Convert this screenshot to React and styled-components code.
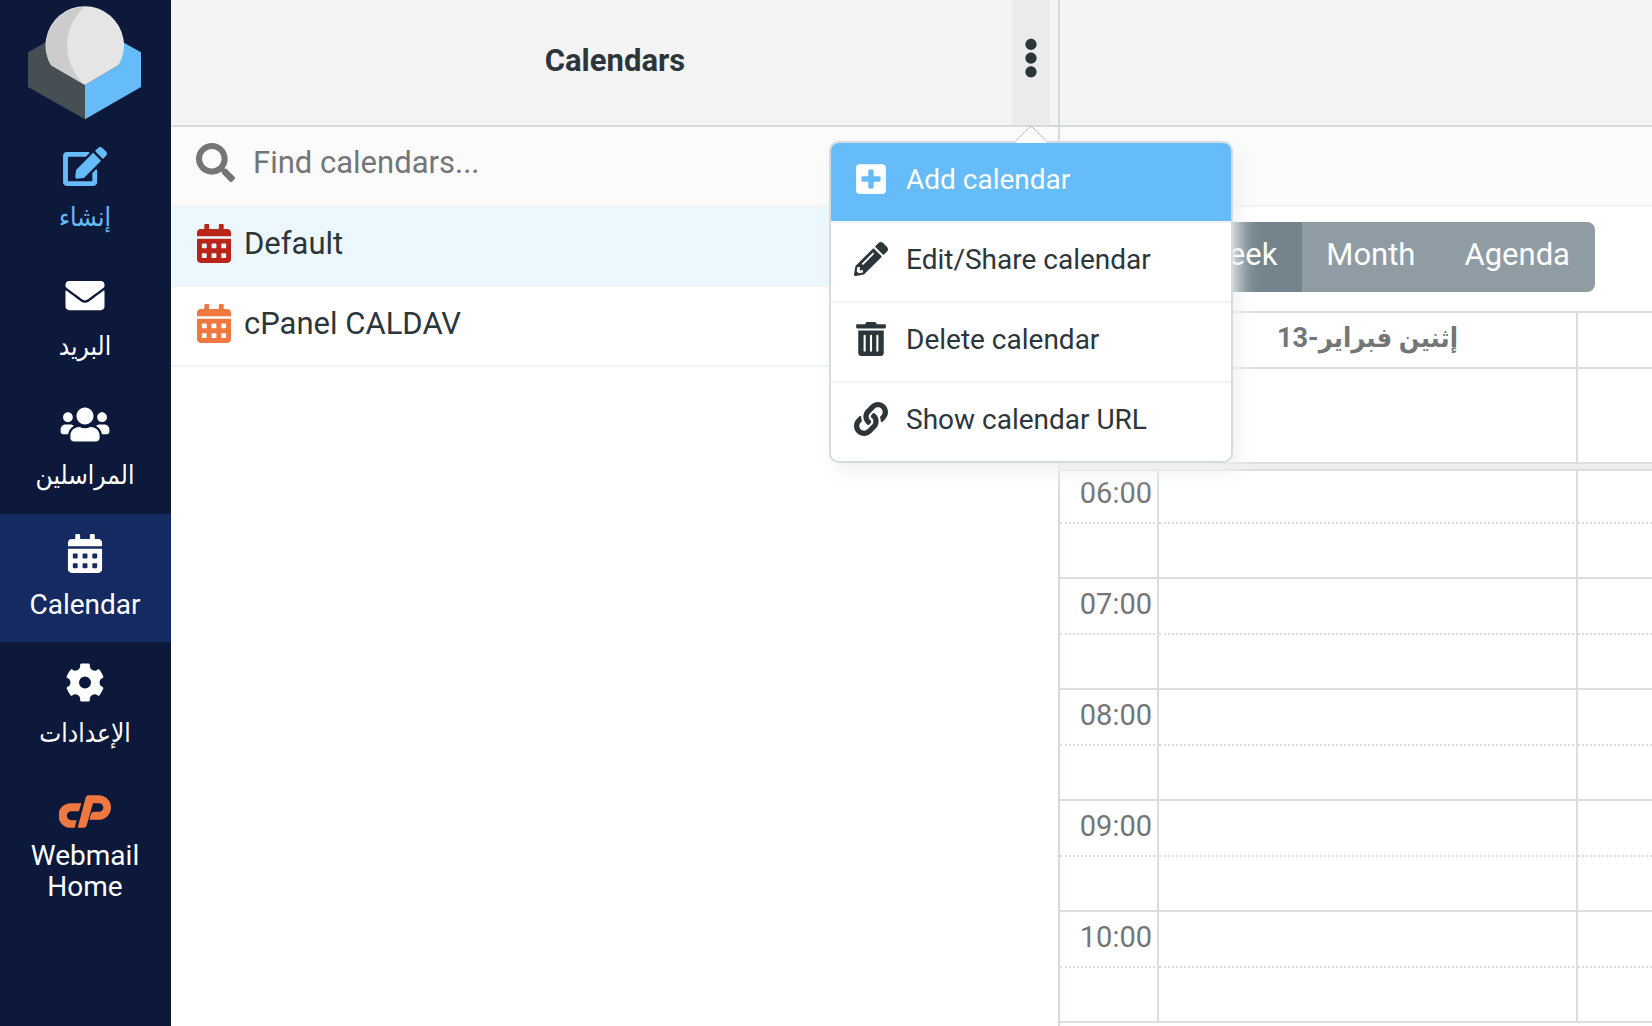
import styled, { createGlobalStyle } from "styled-components";
import {
  FaCalendarAlt,
  FaEdit,
  FaEllipsisV,
  FaEnvelope,
  FaLink,
  FaPencilAlt,
  FaPlusSquare,
  FaSearch,
  FaTrashAlt,
  FaUsers,
} from "react-icons/fa";


const Logo = () => (
  <svg width="114" height="114" viewBox="27 6 114 114" aria-hidden="true">
    <path fill="#465054" d="M28 52.3 50 40v25l35 20v34.3L28 87z" />
    <path fill="#65bcf9" d="M141 52.3 119 40v25L85 85v34.3L141 87z" />
    <path fill="#e5e5e5" d="M51 65.3A39.2 39.2 0 1 1 118.5 65.3L85 85z" />
    <path fill="#cccccc" d="M51 65.3A39.2 39.2 0 0 1 84.5 7A52 52 0 0 0 85 85z" />
  </svg>
);

const GearIcon = () => (
  <svg viewBox="-19.5 -19.5 39 39" fill="currentColor" aria-hidden="true">
    <circle r="10.3" fill="none" stroke="currentColor" strokeWidth="8.6" />
    {[0, 60, 120, 180, 240, 300].map((angle) => (
      <path
        key={angle}
        transform={`rotate(${angle})`}
        d="M-6.5-12.5-4.9-15.2V-17.6Q-4.9-18.8-3.7-18.9Q0-19.3 3.7-18.9Q4.9-18.8 4.9-17.6V-15.2L6.5-12.5z"
      />
    ))}
  </svg>
);

const CpanelMark = () => (
  <svg viewBox="177 104 156 98" fill="#ef7740" aria-hidden="true">
    <path d="M244 128 237 152H214A13 13 0 0 0 214 179H230L224 202H212A37 37 0 0 1 212 128Z" />
    <path d="M233 202 257 111Q259 104 266 104H296A37 37 0 0 1 296 178H268L272 163Q275 154 283 154H297A13 13 0 0 0 297 128H279L260 195Q258 202 251 202Z" />
  </svg>
);

const tasks = [
  { label: "إنشاء", lang: "ar", icon: <FaEdit />, color: "#65bcf9" },
  { label: "البريد", lang: "ar", icon: <FaEnvelope /> },
  { label: "المراسلين", lang: "ar", icon: <FaUsers /> },
  { label: "Calendar", icon: <FaCalendarAlt />, selected: true },
  { label: "الإعدادات", lang: "ar", icon: <GearIcon /> },
  { label: "Webmail Home", icon: <CpanelMark />, compact: true },
];

const calendars = [
  { name: "Default", color: "#bb2418", selected: true },
  { name: "cPanel CALDAV", color: "#ef7740" },
];

const actions = [
  { label: "Add calendar", icon: <FaPlusSquare />, active: true },
  { label: "Edit/Share calendar", icon: <FaPencilAlt /> },
  { label: "Delete calendar", icon: <FaTrashAlt /> },
  { label: "Show calendar URL", icon: <FaLink /> },
];

const hours = ["06:00", "07:00", "08:00", "09:00", "10:00"];

const App = () => {
  return (
    <>
      <GlobalStyle />
      <Layout>
        <TaskMenu>
          <LogoBox>
            <Logo />
          </LogoBox>
          {tasks.map((task) => (
            <TaskLink
              key={task.label}
              href="#"
              $color={task.color}
              $selected={task.selected}
              $compact={task.compact}
            >
              <TaskIcon>{task.icon}</TaskIcon>
              <TaskLabel lang={task.lang}>{task.label}</TaskLabel>
            </TaskLink>
          ))}
        </TaskMenu>

        <ListPanel>
          <Header>
            <Title>Calendars</Title>
            <MenuAnchor>
              <MenuButton type="button" aria-label="Calendar actions">
                <FaEllipsisV />
              </MenuButton>
              <Popup>
                <Arrow width="32" height="18" viewBox="0 0 32 18">
                  <path d="M1 16 16 1l15 15v2H1z" fill="#fff" />
                  <path d="M1 15.5 16 1l15 14.5" fill="none" stroke="#bbb" />
                </Arrow>
                <PopupList>
                  {actions.map((action) => (
                    <li key={action.label}>
                      <Action type="button" $active={action.active}>
                        <ActionIcon>{action.icon}</ActionIcon>
                        {action.label}
                      </Action>
                    </li>
                  ))}
                </PopupList>
              </Popup>
            </MenuAnchor>
          </Header>
          <SearchBar>
            <FaSearch />
            <SearchInput
              type="text"
              aria-label="Find calendars"
              placeholder="Find calendars..."
            />
          </SearchBar>
          <CalendarList>
            {calendars.map((cal) => (
              <CalendarItem key={cal.name} $selected={cal.selected}>
                <FaCalendarAlt color={cal.color} />
                {cal.name}
              </CalendarItem>
            ))}
          </CalendarList>
        </ListPanel>

        <Content>
          <Header />
          <SubBar />
          <ViewBar>
            <ViewButton type="button" $active>Week</ViewButton>
            <ViewButton type="button">Month</ViewButton>
            <ViewButton type="button">Agenda</ViewButton>
          </ViewBar>
          <Grid>
            <Columns />
            <thead>
              <tr>
                <DayHead />
                <DayHead dir="rtl" lang="ar">إثنين فبراير-13</DayHead>
                <DayHead />
              </tr>
            </thead>
            <tbody>
              <tr>
                <AllDay />
                <AllDay />
                <AllDay />
              </tr>
            </tbody>
          </Grid>
          <Divider />
          <Scroller>
            <Grid>
              <Columns />
              <tbody>
                {hours.map((hour) => (
                  <HourRows key={hour} hour={hour} />
                ))}
              </tbody>
            </Grid>
          </Scroller>
        </Content>
      </Layout>
    </>
  );
};

const Columns = () => (
  <colgroup>
    <AxisCol />
    <DayCol />
    <col />
  </colgroup>
);

const HourRows = ({ hour }) => (
  <>
    <tr>
      <Slot as="th" scope="row" $half>{hour}</Slot>
      <Slot $half />
      <Slot $half />
    </tr>
    <tr>
      <Slot />
      <Slot />
      <Slot />
    </tr>
  </>
);

const GlobalStyle = createGlobalStyle`
  * {
    box-sizing: border-box;
  }
  body {
    margin: 0;
    overflow: hidden;
    background: #fff;
    color: #2c363a;
    font-family: Roboto, "DejaVu Sans Condensed", "DejaVu Sans", sans-serif;
    font-size: 31px;
  }
  button, input {
    font-family: inherit;
    font-size: inherit;
    color: inherit;
    border: none;
    background: none;
    padding: 0;
  }
  ul {
    list-style: none;
    margin: 0;
    padding: 0;
  }
  svg {
    flex-shrink: 0;
    display: block;
  }
`;

const Layout = styled.div`
  display: flex;
  height: 100vh;
  overflow: hidden;
`;

const TaskMenu = styled.nav`
  display: flex;
  flex-direction: column;
  gap: 1px;
  flex: 0 0 171px;
  background: #0c193a;
`;

const LogoBox = styled.div`
  display: flex;
  justify-content: center;
  height: 126px;
  padding: 6px 3px 0 0;
`;

const TaskLink = styled.a`
  display: flex;
  flex-direction: column;
  align-items: center;
  gap: ${(p) => (p.$compact ? "9px" : "16px")};
  height: 128px;
  padding: 20px 25px 0 24px;
  color: ${(p) => p.$color || "#fff"};
  background: ${(p) => (p.$selected ? "#142a60" : "transparent")};
  text-decoration: none;
  text-align: center;
`;

const TaskIcon = styled.span`
  svg {
    width: 52px;
    height: 39px;
  }
`;

const TaskLabel = styled.span`
  font-size: 28px;
  line-height: 31px;

  &:lang(ar) {
    font-size: 26px;
  }
`;

const ListPanel = styled.section`
  flex: 0 0 889px;
  border-right: 2px solid #d4dbde;
`;

const Header = styled.header`
  display: flex;
  align-items: center;
  height: 127px;
  padding-right: 8px;
  border-bottom: 2px solid #d4dbde;
  background: #f4f4f4;
`;

const Title = styled.h1`
  flex: 1;
  margin: 0;
  padding: 0 0 5px 47px;
  font-size: 31px;
  font-weight: 700;
  text-align: center;
`;

const MenuAnchor = styled.div`
  position: relative;
  height: 100%;
`;

const MenuButton = styled.button`
  display: flex;
  align-items: center;
  justify-content: center;
  width: 38px;
  height: 100%;
  padding-bottom: 9px;
  background: #ebebeb;
  font-size: 40px;
`;

const Popup = styled.div`
  position: absolute;
  z-index: 2;
  top: 141px;
  right: -183px;
  width: 404px;
  border: 2px solid #d4dbde;
  border-radius: 10px;
  background: #fff;
  box-shadow: 6px 10px 20px #eef1f3;
`;

const Arrow = styled.svg`
  position: absolute;
  top: -18px;
  right: 184px;
`;

const PopupList = styled.ul`
  overflow: hidden;
  border-radius: 8px;

  li + li {
    border-top: 2px solid #f1f3f4;
  }
`;

const Action = styled.button`
  display: flex;
  align-items: center;
  gap: 17px;
  width: 100%;
  height: 78px;
  padding: 0 22px 6px;
  font-size: 28px;
  color: ${(p) => (p.$active ? "#fff" : "#2c363a")};
  background: ${(p) => (p.$active ? "#65bcf9" : "#fff")};
`;

const ActionIcon = styled.span`
  display: flex;
  justify-content: center;
  width: 36px;
  font-size: 34px;
`;

const SubBar = styled.div`
  height: 80px;
  border-bottom: 2px solid #f1f3f4;
  background: #fbfbfb;
`;

const SearchBar = styled(SubBar)`
  display: flex;
  align-items: center;
  gap: 18px;
  padding: 0 25px 7px;
  color: #737677;

  svg {
    font-size: 39px;
  }
`;

const SearchInput = styled.input`
  flex: 1;
  outline: none;

  &::placeholder {
    color: #737677;
    opacity: 1;
  }
`;

const CalendarList = styled.ul``;

const CalendarItem = styled.li`
  display: flex;
  align-items: center;
  gap: 13px;
  height: 80px;
  padding: 0 26px 6px;
  border-bottom: 2px solid #f1f3f4;
  background: ${(p) => (p.$selected ? "#ecf8fe" : "#fff")};

  svg {
    width: 34px;
    height: 39px;
  }
`;

const Content = styled.main`
  flex: 1;
  min-width: 0;
`;

const ViewBar = styled.div`
  display: flex;
  justify-content: flex-end;
  padding: 15px 57px 19px 0;
`;

const ViewButton = styled.button`
  height: 70px;
  padding: 0 25px 5px 24px;
  color: #fff;
  background: ${(p) => (p.$active ? "#73848c" : "#8f9ca4")};

  &:last-child {
    border-radius: 0 8px 8px 0;
  }
`;

const Grid = styled.table`
  width: 100%;
  table-layout: fixed;
  border-spacing: 0;
  color: #737677;

  tr > :last-child {
    border-right: none;
  }
`;

const AxisCol = styled.col`
  width: 99px;
`;

const DayCol = styled.col`
  width: 419px;
`;

const DayHead = styled.th`
  height: 58px;
  padding: 0 4px 4px 0;
  border: solid #ddd;
  border-width: 2px 2px 2px 0;
  font-size: 27px;
  line-height: 32px;
`;

const AllDay = styled.td`
  height: 95px;
  padding: 0;
  border: solid #ddd;
  border-width: 0 2px 2px 0;
`;

const Divider = styled.div`
  height: 7px;
  border-bottom: 2px solid #ddd;
  background: #eee;
`;

const Scroller = styled.div`
  overflow: hidden;

  table {
    margin-top: -3px;
  }
`;

const Slot = styled.td`
  height: ${(p) => (p.$half ? "56px" : "55px")};
  padding: 0 5px 4px 0;
  border-right: 2px solid #ddd;
  border-bottom: 2px ${(p) => (p.$half ? "dotted" : "solid")} #ddd;
  font-size: 29px;
  font-weight: 400;
  line-height: 32px;
  text-align: right;
`;

export default App;
